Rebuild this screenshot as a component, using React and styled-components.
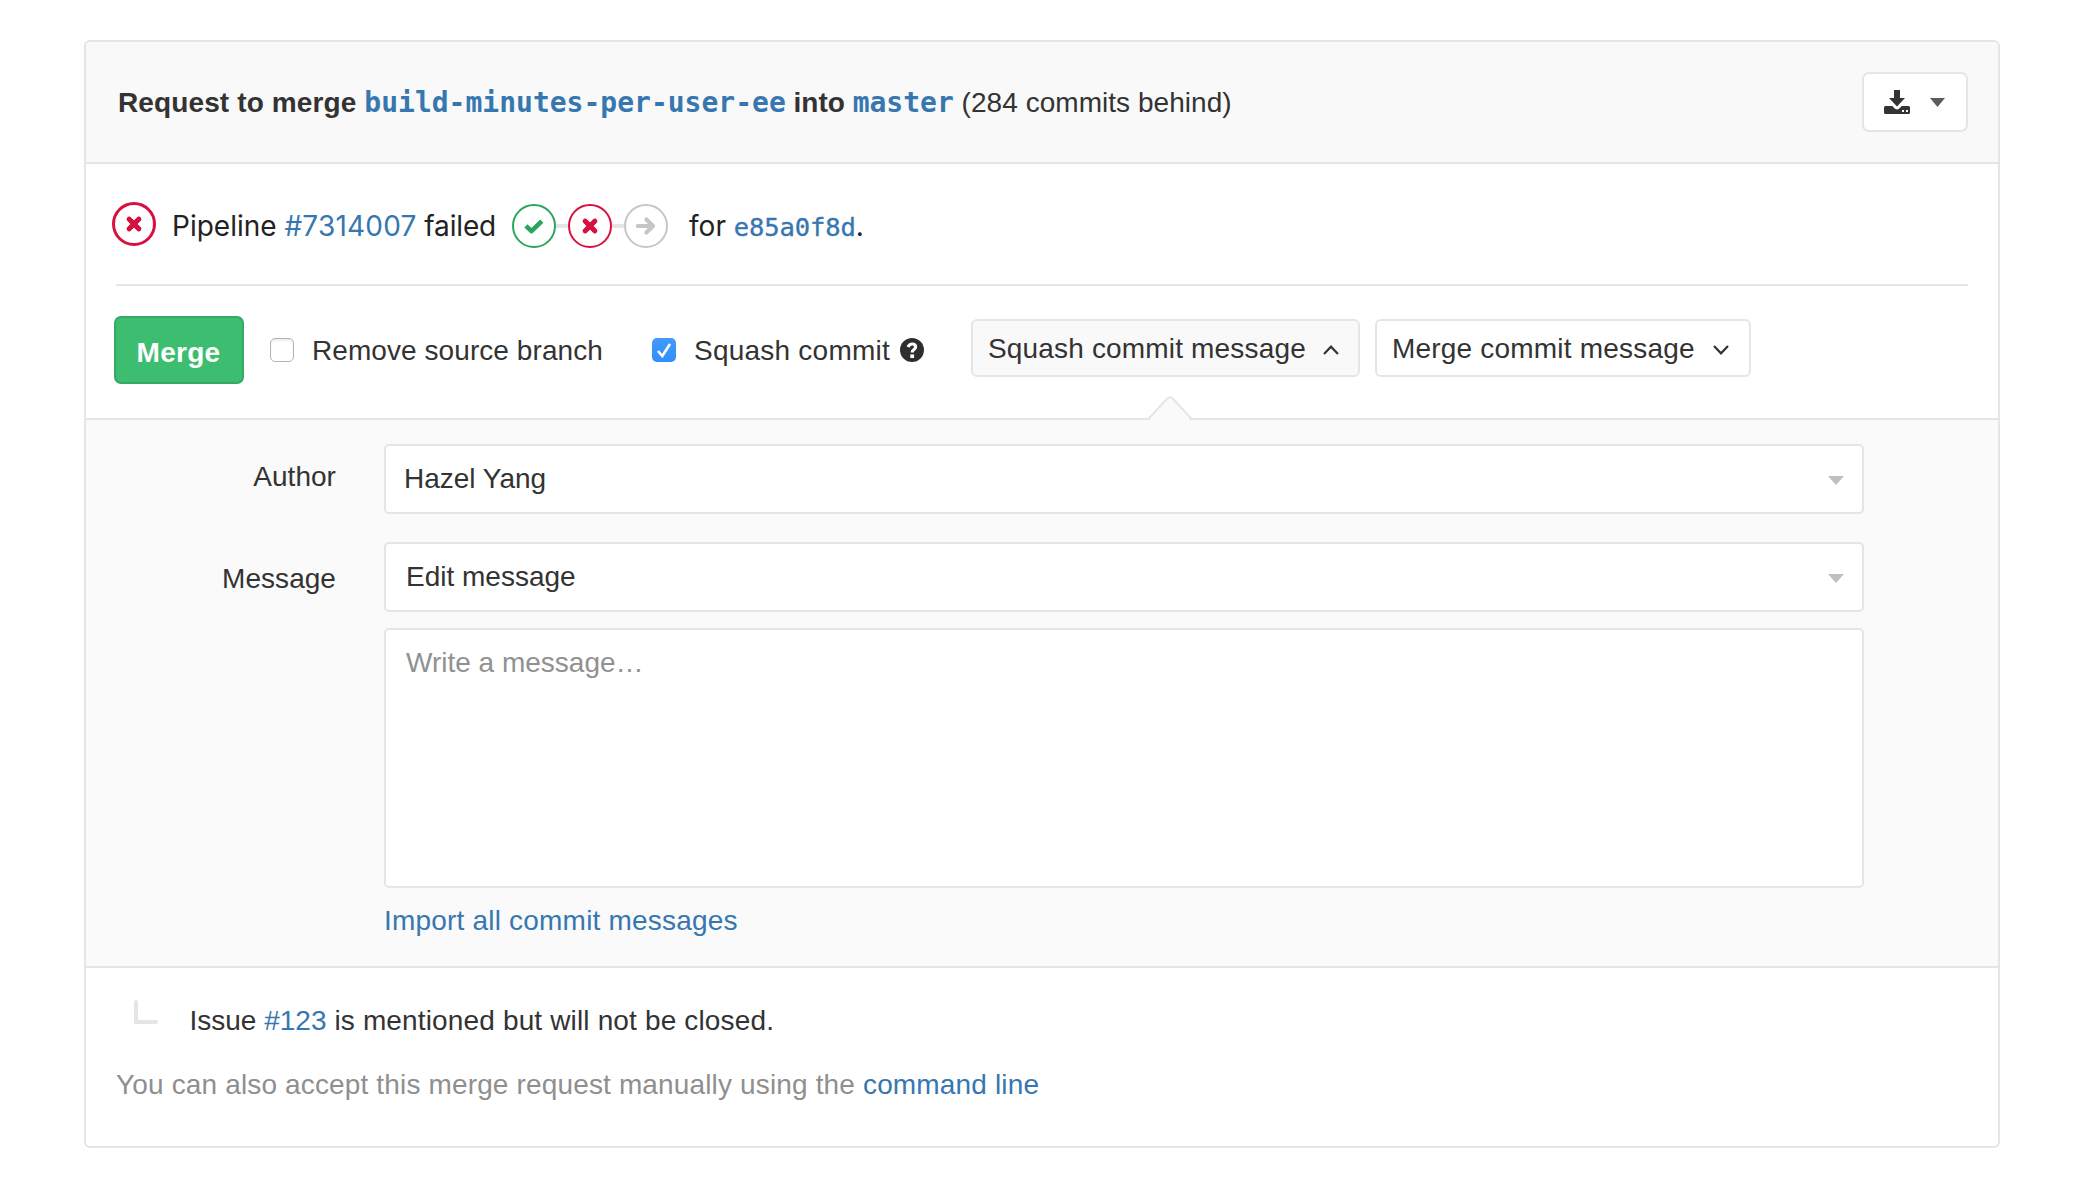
import React from "react";
import styled, { createGlobalStyle } from "styled-components";

const Global = createGlobalStyle`
  * { box-sizing: border-box; }
  body {
    margin: 0;
    background: #fff;
    color: #333;
    font-family: "Liberation Sans", Arial, sans-serif;
    font-size: 28px;
    line-height: 32px;
  }
`;

const line = "#e5e5e5";
const mono = `"DejaVu Sans Mono", Menlo, monospace`;

const Page = styled.main`
  padding: 40px 82px 40px 84px;
`;
const Card = styled.section`
  height: 1108px;
  border: 2px solid ${line};
  border-radius: 6px;
  display: flex;
  flex-direction: column;
`;
const Header = styled.header`
  height: 122px;
  flex: none;
  display: flex;
  align-items: center;
  justify-content: space-between;
  padding: 0 30px 0 32px;
  background: #f9f9f9;
  border-bottom: 2px solid ${line};
  border-radius: 4px 4px 0 0;
`;
const Text = styled.span`
  white-space: pre;
  letter-spacing: ${(p) => p.$track || 0}px;
`;
const Title = styled.div`
  white-space: pre;
  padding-top: 2px;
  b:first-child { letter-spacing: 0.12px; }
`;
const Link = styled.a`
  color: #3777b0;
  text-decoration: none;
`;
const Branch = styled(Link)`
  font: bold 28px/32px ${mono};
`;
const DownloadButton = styled.button`
  width: 106px;
  height: 60px;
  padding: 0 21px 0 20px;
  display: flex;
  align-items: center;
  justify-content: space-between;
  background: #fff;
  border: 2px solid ${line};
  border-radius: 7px;
  color: #333;
`;
const Pipeline = styled.div`
  height: 122px;
  flex: none;
  margin: 0 30px;
  border-bottom: 2px solid ${line};
  display: flex;
  align-items: flex-start;
  color: #222;
  font-family: Inter, sans-serif;
`;
const StatusIcon = styled.div`
  display: flex;
  margin: 38px 16px 0 -4px;
`;
const PipelineText = styled.div`
  min-width: ${(p) => p.$width || 0}px;
  margin-top: 46px;
  white-space: pre;
`;
const Stages = styled.div`
  display: flex;
  align-items: center;
  margin: 40px 21px 0 16px;
`;
const Connector = styled.div`
  width: 12px;
  height: 4px;
  background: ${line};
`;
const Sha = styled(Link)`
  font: 25.5px/32px ${mono};
  letter-spacing: -0.1px;
  -webkit-text-stroke: 0.35px #3777b0;
`;
const Actions = styled.div`
  height: 132px;
  flex: none;
  padding: 30px 0 0 28px;
  display: flex;
  align-items: flex-start;
`;
const MergeButton = styled.button`
  width: 130px;
  height: 68px;
  margin-right: 26px;
  padding: 5px 1px 0 0;
  background: #3dbd70;
  border: 2px solid #35a965;
  border-radius: 7px;
  color: #fff;
  font: bold 28px/32px "Liberation Sans", Arial, sans-serif;
  letter-spacing: 0.3px;
`;
const Option = styled.label`
  width: ${(p) => p.$width}px;
  height: 68px;
  flex: none;
  display: flex;
  align-items: center;
  > span:last-of-type { padding-top: 2px; }
`;
const Box = styled.span`
  width: 24px;
  height: 24px;
  margin-right: 18px;
  flex: none;
  display: flex;
  border-radius: 5px;
  border: ${(p) => (p.$checked ? "0" : "1.5px solid #b4b4b4")};
  background: ${(p) => (p.$checked ? "linear-gradient(#419bfb, #318ffd)" : "#fff")};
  box-shadow: ${(p) => (p.$checked ? "none" : "inset 0 2px 2px #eee")};
`;
const Help = styled.svg`
  margin-left: auto;
`;
const ToggleButton = styled.button`
  width: ${(p) => p.$width}px;
  height: 58px;
  margin: 3px 0 0 ${(p) => p.$left}px;
  padding: 1px ${(p) => (p.$open ? 19 : 20)}px 0 15px;
  display: flex;
  align-items: center;
  justify-content: space-between;
  background: ${(p) => (p.$open ? "#f9f9f9" : "#fff")};
  border: 2px solid ${line};
  border-radius: 6px;
  color: #333;
  font: 28px/32px "Liberation Sans", Arial, sans-serif;
  svg { margin-top: 3px; }
`;
const Panel = styled.div`
  position: relative;
  height: 550px;
  flex: none;
  padding: 24px 134px 0 0;
  background: #fafafa;
  border: solid ${line};
  border-width: 2px 0;
`;
const Pointer = styled.svg`
  position: absolute;
  left: 1060px;
  top: -24px;
`;
const Row = styled.div`
  display: grid;
  grid-template-columns: 250px 1fr;
  column-gap: 48px;
  margin-bottom: 28px;
`;
const Label = styled.div`
  text-align: right;
  letter-spacing: 0.05px;
  padding-top: ${(p) => p.$top}px;
`;
const Select = styled.div`
  height: 70px;
  padding: 0 18px 0 ${(p) => p.$inset || 18}px;
  display: flex;
  align-items: center;
  justify-content: space-between;
  background: #fff;
  border: 2px solid ${line};
  border-radius: 5px;
  svg { margin-top: 3px; }
`;
const MessageBox = styled.div`
  height: 260px;
  margin: 16px 0 17px;
  padding: 17px 20px;
  background: #fff;
  border: 2px solid ${line};
  border-radius: 5px;
  color: #919191;
`;
const Footer = styled.footer`
  padding: 32px 30px 0;
  color: #8f8f8f;
`;
const Issue = styled.div`
  display: flex;
  margin-bottom: 32px;
  color: #333;
  svg { margin: 0 31.5px 0 18px; }
  span { margin-top: 5px; }
`;

function Status({ kind, stroke = 2 }) {
  const color = { failed: "#d9103f", passed: "#2ba55d", skipped: "#c6c6c6" }[kind];
  return (
    <svg width="44" height="44" viewBox="0 0 44 44" fill="none" stroke={color} strokeLinejoin="round">
      <circle cx="22" cy="22" r={22 - stroke / 2} strokeWidth={stroke} fill="#fff" />
      {kind === "failed" && (
        <g>
          <path d="M16.2 16.2 27.8 27.8M27.8 16.2 16.2 27.8" strokeWidth="4.6" />
          <path d="M17 17 27 27M27 17 17 27" strokeWidth="4.6" strokeLinecap="round" />
        </g>
      )}
      {kind === "passed" && <path d="M13.9 21.8 19.5 27.2 29.8 17.2" strokeWidth="4.6" />}
      {kind === "skipped" && (
        <path d="M13.8 22H28.5M22.4 15.5 29 22 22.4 28.5" strokeWidth="4.2" strokeLinecap="round" />
      )}
    </svg>
  );
}

function Chevron({ up }) {
  return (
    <svg width="16" height="10" viewBox="0 0 16 10" fill="none" stroke="#333" strokeWidth="2.2">
      <path d={up ? "M1 8.9 8 1.7 15 8.9" : "M1 1.1 8 8.3 15 1.1"} />
    </svg>
  );
}

function Caret({ color, width = 16 }) {
  return (
    <svg width={width} height="9" viewBox="0 0 16 9" preserveAspectRatio="none" fill={color}>
      <path d="M0 0H16L8 9Z" />
    </svg>
  );
}

export default function App() {
  return (
    <>
      <Global />
      <Page>
        <Card>
          <Header>
            <Title>
              <b>Request to merge </b>
              <Branch>build-minutes-per-user-ee</Branch>
              <b> into </b>
              <Branch>master</Branch>
              <Text $track={0.04}> (284 commits behind)</Text>
            </Title>
            <DownloadButton>
              <svg width="26" height="24" viewBox="0 0 26 24" fill="#333">
                <path d="M10 0H16V8H21L13 16.5 5 8H10Z" />
                <path
                  fillRule="evenodd"
                  d="M1.5 16H8.2L11 18.8Q13 20.2 15 18.8L17.8 16H24.5Q26 16 26 17.5V22.5Q26 24 24.5 24H1.5Q0 24 0 22.5V17.5Q0 16 1.5 16ZM18 20V22H20V20ZM22 20V22H24V20Z"
                />
              </svg>
              <Caret color="#5c5c5c" width={15} />
            </DownloadButton>
          </Header>

          <Pipeline>
            <StatusIcon><Status kind="failed" stroke={3} /></StatusIcon>
            <PipelineText $width={324}>
              <Text>Pipeline </Text>
              <Link><Text $track={0.2}>#7314007</Text></Link>
              <Text $track={-0.15}> failed</Text>
            </PipelineText>
            <Stages>
              <Status kind="passed" />
              <Connector />
              <Status kind="failed" />
              <Connector />
              <Status kind="skipped" />
            </Stages>
            <PipelineText>
              for <Sha>e85a0f8d</Sha>.
            </PipelineText>
          </Pipeline>

          <Actions>
            <MergeButton>Merge</MergeButton>
            <Option $width={382}>
              <Box />
              <Text $track={0.07}>Remove source branch</Text>
            </Option>
            <Option $width={272}>
              <Box $checked>
                <svg width="24" height="24" viewBox="0 0 24 24" fill="none" stroke="#fff" strokeWidth="2.6">
                  <path d="M6 13 10.3 18 18 6" />
                </svg>
              </Box>
              <Text $track={0.23}>Squash commit</Text>
              <Help width="24" height="24" viewBox="0 0 24 24">
                <circle cx="12" cy="12" r="12" fill="#2e2e2e" />
                <path d="M8 9Q9.4 6 12.2 6 15.6 6 15.6 9 15.6 10.7 13.6 11.8 12.2 12.6 12.2 14.4" fill="none" stroke="#fff" strokeWidth="3.2" />
                <path d="M10.3 16.4H14.1V20H10.3Z" fill="#fff" />
              </Help>
            </Option>
            <ToggleButton $open $width={389} $left={47}>
              <Text $track={0.17}>Squash commit message</Text>
              <Chevron up />
            </ToggleButton>
            <ToggleButton $width={376} $left={15}>
              <Text $track={0.2}>Merge commit message</Text>
              <Chevron />
            </ToggleButton>
          </Actions>

          <Panel>
            <Pointer width="48" height="26" viewBox="0 0 48 26">
              <path d="M2 26 21 2.8Q24 0 27 2.8L46 26Z" fill="#fafafa" />
              <path d="M2 23.4 21 2.8Q24 0 27 2.8L46 23.4" fill="none" stroke={line} strokeWidth="2" />
            </Pointer>
            <Row>
              <Label $top={17}>Author</Label>
              <Select>
                <Text>Hazel Yang</Text>
                <Caret color="#bfbfbf" />
              </Select>
            </Row>
            <Row>
              <Label $top={21}>Message</Label>
              <div>
                <Select $inset={20}>
                  <Text>Edit message</Text>
                  <Caret color="#bfbfbf" />
                </Select>
                <MessageBox>Write a message…</MessageBox>
                <Link><Text $track={0.2}>Import all commit messages</Text></Link>
              </div>
            </Row>
          </Panel>

          <Footer>
            <Issue>
              <svg width="24" height="24" viewBox="0 0 24 24" fill="none" stroke={line} strokeWidth="4" strokeLinecap="round">
                <path d="M2 2V22H22" />
              </svg>
              <Text $track={0.15}>
                <Text>Issue <Link>#123</Link></Text> is mentioned but will not be closed.
              </Text>
            </Issue>
            <Text $track={0.15}>You can also accept this merge request manually using the <Link>command line</Link></Text>
          </Footer>
        </Card>
      </Page>
    </>
  );
}
